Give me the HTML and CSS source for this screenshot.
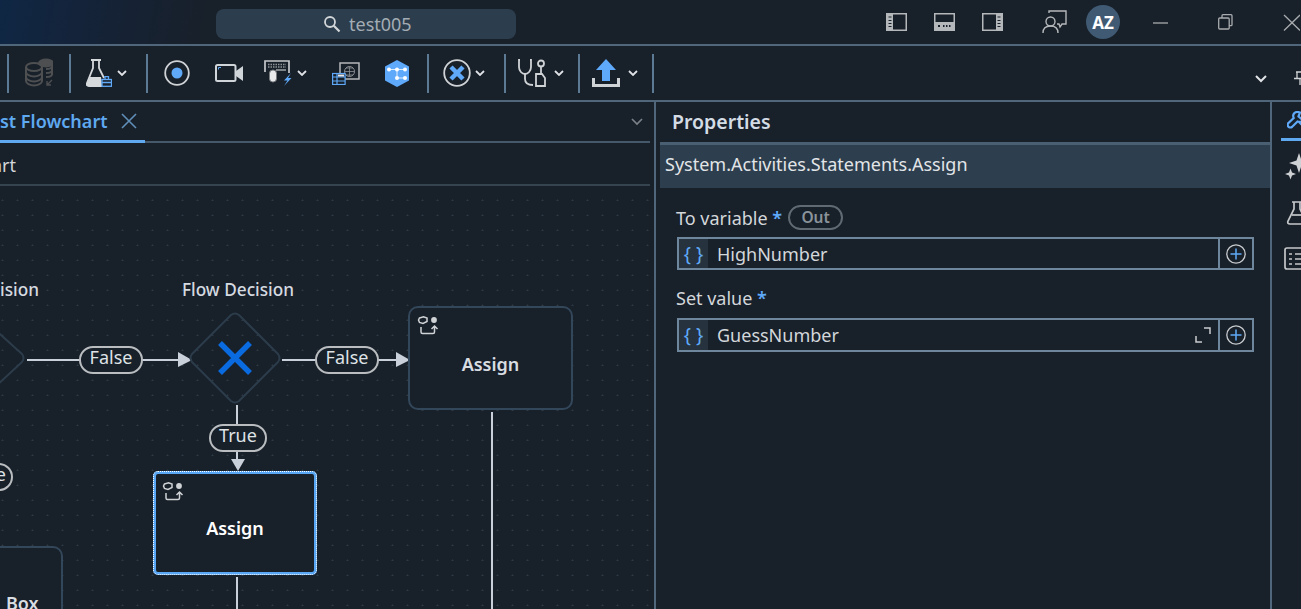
FILE: index.html
```html
<!DOCTYPE html>
<html lang="en">
<head>
<meta charset="utf-8">
<title>test005</title>
<link rel="stylesheet" href="styles.css">
</head>
<body>
<div class="app">
  <header class="titlebar">
    <div class="search">
      <svg width="18" height="18" viewBox="0 0 18 18"><circle cx="7" cy="7" r="5" fill="none" stroke="#d3d6d9" stroke-width="1.8"/><path d="M10.8 10.8L16.5 16.5" stroke="#d3d6d9" stroke-width="2.2"/></svg>
      <span>test005</span>
    </div>
    <div class="layout-icons">
      <svg width="21" height="18" viewBox="0 0 21 18"><rect x=".75" y=".75" width="19.5" height="16.5" fill="none" stroke="#b5b8ba" stroke-width="1.5"/><rect x="1" y="1" width="6" height="16" fill="#b5b8ba"/><path d="M2.5 4h3M2.5 7.500h3M2.500 10.500h3M2.500 13.500h3" stroke="#18202a" stroke-width="1.200"/></svg>
      <svg width="21" height="18" viewBox="0 0 21 18"><rect x=".75" y=".75" width="19.5" height="16.500" fill="none" stroke="#b5b8ba" stroke-width="1.500"/><rect x="1" y="9" width="19" height="8" fill="#b5b8ba"/><path d="M4 13h2M9 13h1.500M12 13h1.500M15 13h1.500" stroke="#18202a" stroke-width="2"/></svg>
      <svg width="21" height="18" viewBox="0 0 21 18"><rect x=".75" y=".75" width="19.500" height="16.500" fill="none" stroke="#b5b8ba" stroke-width="1.500"/><rect x="14" y="1" width="6" height="16" fill="#b5b8ba"/><path d="M15.500 4h3M15.500 7.500h3M15.500 10.500h3M15.500 13.500h3" stroke="#18202a" stroke-width="1.200"/></svg>
    </div>
    <svg class="feedback" width="25" height="24" viewBox="0 0 25 24" fill="none" stroke="#b5b8ba" stroke-width="1.400"><path d="M7 3V1h17v13h-4l-2 3-1-3h-2"/><circle cx="8.500" cy="11.500" r="4.500"/><path d="M1 23c0-5 3-7 7.500-7s7.500 2 7.500 7"/></svg>
    <div class="avatar">AZ</div>
    <div class="win-controls">
      <svg width="15" height="15" viewBox="0 0 15 15"><path d="M0 8h15" stroke="#a9acae" stroke-width="1.300"/></svg>
      <svg width="15" height="16" viewBox="0 0 15 16" fill="none" stroke="#a9acae" stroke-width="1.300"><rect x=".7" y="4" width="10.500" height="11" rx="1"/><path d="M4 4V1.700q0-1 1-1h8q1 0 1 1v9q0 1-1 1h-2"/></svg>
      <svg width="17" height="17" viewBox="0 0 17 17"><path d="M1 1l16 15.500M17 1L1 16.500" stroke="#a9acae" stroke-width="1.300"/></svg>
    </div>
  </header>

  <nav class="toolbar">
    <i class="sep"></i>
    <div class="tool w-db">
      <svg width="28" height="30" viewBox="0 0 28 30" fill="none" stroke="#4d4f51" stroke-width="2"><ellipse cx="21" cy="5" rx="7" ry="3.500" fill="#4d4f51"/><path d="M27 8c0 2-3 3-6 3M27 12c0 2-3 3-6 3M27 16c0 2-3 3-6 3M27 5v12"/><ellipse cx="9" cy="9" rx="8" ry="4"/><path d="M1 9v14c0 2.500 4 4.500 8 4.500s8-2 8-4.500V9M1 14c0 2.500 4 4.500 8 4.500s8-2 8-4.500M1 19c0 2.500 4 4.500 8 4.500s8-2 8-4.500"/><path d="M27 22l-5 5M22 23v4h4" stroke-width="1.400"/></svg>
    </div>
    <i class="sep"></i>
    <div class="tool w-flask">
      <svg width="26" height="28" viewBox="0 0 26 28"><path d="M5 1h10M7 1v8L1 24q-1 3 2 3h13" fill="none" stroke="#d6d9dc" stroke-width="1.800"/><path d="M13 1v8l5 10" fill="none" stroke="#d6d9dc" stroke-width="1.800"/><path d="M4 18h11l1 9H3q-3 0-2-3z" fill="#d6d9dc"/><rect x="16" y="20.500" width="9.500" height="6.800" fill="#18202a" stroke="#5fa9f8" stroke-width="1.300"/><path d="M19 20v-2.300h3.500V20M16 23.500h9.500" fill="none" stroke="#5fa9f8" stroke-width="1.300"/></svg>
      <svg class="chev" width="10" height="6" viewBox="0 0 10 6"><path d="M1 1l4 4 4-4" fill="none" stroke="#e0e3e6" stroke-width="1.800"/></svg>
    </div>
    <i class="sep"></i>
    <div class="tool w-record">
      <svg width="26" height="26" viewBox="0 0 26 26"><circle cx="13" cy="13" r="11.800" fill="none" stroke="#d0d3d6" stroke-width="1.800"/><circle cx="13" cy="13" r="5.500" fill="#5fa9f8"/></svg>
    </div>
    <div class="tool w-camera">
      <svg width="28" height="18" viewBox="0 0 28 18"><rect x="1" y="1" width="19.500" height="16" rx="1.500" fill="none" stroke="#d0d5d9" stroke-width="2"/><path d="M3.500 5.500V3.500h2.500" fill="none" stroke="#5fa9f8" stroke-width="1"/><path d="M21 7l7-5v15l-7-5z" fill="#d0d5d9"/></svg>
    </div>
    <div class="tool w-keys">
      <svg width="28" height="26" viewBox="0 0 28 26"><path d="M1 12V1h24v12" fill="none" stroke="#c6c9cc" stroke-width="1.700"/><path d="M4 4.500h18M4 7h18" stroke="#8e9296" stroke-width="1.600" stroke-dasharray="1.500 1"/><path d="M12 10h10" stroke="#9a9ea1" stroke-width="1.600"/><rect x="5.500" y="10" width="7" height="12" rx="3.400" fill="#e8eaec" stroke="#777b7f"/><path d="M27 13l-7 7.500h3.500L20 26l7.500-8H24l3-5z" fill="#5fa9f8"/></svg>
      <svg class="chev" width="10" height="6" viewBox="0 0 10 6"><path d="M1 1l4 4 4-4" fill="none" stroke="#e0e3e6" stroke-width="1.800"/></svg>
    </div>
    <div class="tool w-web">
      <svg width="28" height="23" viewBox="0 0 28 23"><rect x="8" y="1" width="19" height="16" fill="#18202a" stroke="#b5b8ba" stroke-width="1.500"/><circle cx="17.500" cy="9.500" r="5" fill="none" stroke="#8d9093"/><path d="M12.500 9.500h10M17.500 4.500v10M14 6h7M14 13h7" stroke="#8d9093" stroke-width=".8"/><rect x=".6" y="11.500" width="12.500" height="11" fill="#18202a" stroke="#5fa9f8" stroke-width="1.200"/><path d="M.6 15h12.500M.6 19h12.500M5 11.500v11" stroke="#5fa9f8" stroke-width="1.200"/><path d="M6 12.500h6v2H6z" fill="#e8eaec"/></svg>
    </div>
    <div class="tool w-hex">
      <svg width="24" height="27" viewBox="0 0 24 27"><path d="M12 0l12 6.500v14L12 27 0 20.500v-14z" fill="#5fa9fb"/><path d="M4 9.500h16M12 9.500v8.500h8" fill="none" stroke="#fff" stroke-width=".8"/><circle cx="4" cy="9.500" r="2" fill="#fff"/><circle cx="12" cy="9.500" r="2" fill="#fff"/><circle cx="20" cy="9.500" r="2" fill="#fff"/><circle cx="12" cy="18" r="2" fill="#fff"/><circle cx="20" cy="18" r="2" fill="#fff"/></svg>
    </div>
    <i class="sep"></i>
    <div class="tool w-cancel">
      <svg width="28" height="28" viewBox="0 0 28 28"><circle cx="14" cy="14" r="12.800" fill="none" stroke="#d0d3d6" stroke-width="1.800"/><path d="M8 8l12 12M20 8L8 20" stroke="#5fa9f8" stroke-width="4.500"/></svg>
      <svg class="chev" width="10" height="6" viewBox="0 0 10 6"><path d="M1 1l4 4 4-4" fill="none" stroke="#e0e3e6" stroke-width="1.800"/></svg>
    </div>
    <i class="sep"></i>
    <div class="tool w-scope">
      <svg width="28" height="28" viewBox="0 0 28 28" fill="none" stroke="#d0d3d6" stroke-width="1.800"><path d="M2 1H1v7c0 4 3 7 6 7s6-3 6-7V1h-1"/><path d="M7 15v5c0 4 3 6 8 6"/><circle cx="23" cy="4.500" r="3"/><path d="M23 7.500v7"/><path d="M18 15h6l3 4v8h-9z"/></svg>
      <svg class="chev" width="10" height="6" viewBox="0 0 10 6"><path d="M1 1l4 4 4-4" fill="none" stroke="#e0e3e6" stroke-width="1.800"/></svg>
    </div>
    <i class="sep"></i>
    <div class="tool w-upload">
      <svg width="28" height="28" viewBox="0 0 28 28"><path d="M14 0l10 11h-6v11h-8V11H4z" fill="#5fa9fb"/><path d="M1.500 19v7.500h25V19" fill="none" stroke="#d0d3d6" stroke-width="3"/></svg>
      <svg class="chev" width="10" height="6" viewBox="0 0 10 6"><path d="M1 1l4 4 4-4" fill="none" stroke="#e0e3e6" stroke-width="1.800"/></svg>
    </div>
    <i class="sep"></i>
    <div class="toolbar-end">
      <svg width="12" height="8" viewBox="0 0 12 8"><path d="M1 1l5 5 5-5" fill="none" stroke="#e0e3e6" stroke-width="2"/></svg>
      <svg class="pin" width="14" height="14" viewBox="0 0 14 14" fill="none" stroke="#d0d3d6" stroke-width="1.300"><path d="M3 1h8M4 1v6M10 1v6M1 7.500h12M7 8v6"/></svg>
    </div>
  </nav>

  <main class="workspace">
    <section class="designer">
      <div class="tabs">
        <div class="tab"><span>st Flowchart</span>
          <svg width="16" height="16" viewBox="0 0 16 16"><path d="M1 1l14 14M15 1L1 15" stroke="#5f8fb8" stroke-width="1.600"/></svg>
        </div>
        <svg width="12" height="8" viewBox="0 0 12 8"><path d="M1 1l5 5 5-5" fill="none" stroke="#7b8086" stroke-width="1.700"/></svg>
      </div>
      <div class="crumb">art</div>
      <div class="canvas">
        <svg class="edges" width="651" height="423" viewBox="0 186 651 423">
          <g stroke="#c9d0da" stroke-width="2" fill="none">
            <path d="M27 360H180M282 360H398M237 405V460M492 412V609M237 577V609"/>
          </g>
          <g fill="#c9d0da">
            <path d="M178 352l14 8-14 7zM396 352l14 8-14 7zM231 459h14l-7 12z"/>
          </g>
          <g fill="none" stroke="#2c3c4a" stroke-width="2" stroke-linejoin="round">
            <path d="M-20 316L22 354q3 4 0 8L-20 401"/>
            <path d="M231 315q4-3 8 0L278 354q3 4 0 8L239 401q-4 3-8 0L192 362q-3-4 0-8z"/>
          </g>
          <path d="M220 343l30 30M250 343l-30 30" stroke="#0a6ae0" stroke-width="5.500"/>
        </svg>

        <div class="node-title title-left">ision</div>
        <div class="node-title title-main">Flow Decision</div>

        <div class="pill pill-f1">False</div>
        <div class="pill pill-f2">False</div>
        <div class="pill pill-t1">True</div>
        <div class="pill pill-t2">e</div>

        <div class="node node-right">
          <svg class="node-icon" width="23" height="20" viewBox="0 0 23 20" fill="none" stroke="#d0d3d6" stroke-width="1.500"><path d="M2.500 2l4-1.200L10 2v3.500L6 7.500 2.500 6.500 1.500 4z"/><circle cx="17" cy="4" r="2.900" fill="#d0d3d6" stroke="none"/><path d="M4 11v5q0 1.500 1.500 1.500H16q1.500 0 1.500-1.500v-5.500M14.500 13l3-3 3 3"/></svg>
          <span>Assign</span>
        </div>
        <div class="node node-selected">
          <svg class="node-icon" width="23" height="20" viewBox="0 0 23 20" fill="none" stroke="#d0d3d6" stroke-width="1.500"><path d="M2.500 2l4-1.200L10 2v3.500L6 7.500 2.500 6.500 1.500 4z"/><circle cx="17" cy="4" r="2.900" fill="#d0d3d6" stroke="none"/><path d="M4 11v5q0 1.500 1.500 1.500H16q1.500 0 1.500-1.500v-5.500M14.500 13l3-3 3 3"/></svg>
          <span>Assign</span>
        </div>
        <div class="node node-box"><span>Box</span></div>
      </div>
    </section>

    <aside class="properties">
      <h2 class="props-title">Properties</h2>
      <div class="props-type">System.Activities.Statements.Assign</div>
      <form class="props-form">
        <div class="field-label first"><span>To variable <b>*</b></span><span class="out">Out</span></div>
        <div class="field short">
          <div class="field-main">
            <span class="braces">{ }</span>
            <span class="value">HighNumber</span>
          </div>
          <div class="plus"><svg width="20" height="20" viewBox="0 0 20 20"><circle cx="10" cy="10" r="9.200" fill="none" stroke="#c9ccce" stroke-width="1.300"/><path d="M4.500 10h11M10 4.500v11" stroke="#5fa9f8" stroke-width="1.500"/></svg></div>
        </div>
        <div class="field-label second"><span>Set value <b>*</b></span></div>
        <div class="field">
          <div class="field-main">
            <span class="braces">{ }</span>
            <span class="value">GuessNumber</span>
            <svg class="expand" width="16" height="16" viewBox="0 0 16 16" fill="none" stroke="#c9ccce" stroke-width="1.500"><path d="M9 1h6v6M1 9v6h6"/></svg>
          </div>
          <div class="plus"><svg width="20" height="20" viewBox="0 0 20 20"><circle cx="10" cy="10" r="9.200" fill="none" stroke="#c9ccce" stroke-width="1.300"/><path d="M4.500 10h11M10 4.500v11" stroke="#5fa9f8" stroke-width="1.500"/></svg></div>
        </div>
      </form>
    </aside>

    <div class="rail">
      <div class="rail-tab">
        <svg width="22" height="18" viewBox="0 0 22 18" fill="none" stroke="#5fa9f8" stroke-width="2.200"><path d="M13 1.500q-4-1.500-6 1-1.500 2-.3 4.500L1 12.500q-1 2 .7 3.500 1.800 1 3.300 0l5.500-5.500q3 1 5-.5 2-2 1.500-5l-3 2.500-2.500-2z"/><path d="M12 11l6 6"/></svg>
      </div>
      <svg class="rail-icon spark" width="22" height="28" viewBox="0 0 22 28"><path d="M14 0l2.500 7.500L24 10l-7.500 2.500L14 20l-2.500-7.500L4 10l7.500-2.500zM5.500 15.500l1.500 4 4 1.500-4 1.500-1.500 4-1.500-4-4-1.500 4-1.500z" fill="#cfd2d4"/></svg>
      <svg class="rail-icon flask" width="22" height="24" viewBox="0 0 22 24" fill="none" stroke="#c5c8ca" stroke-width="1.700"><path d="M5 1h9M7 1v7L1 20q-1 3 2 3h14q3 0 2-3L13 8V1"/><path d="M5 14h10"/></svg>
      <svg class="rail-icon list" width="22" height="23" viewBox="0 0 22 23" fill="none" stroke="#c5c8ca" stroke-width="1.700"><rect x="1" y="1" width="26" height="21" rx="2"/><path d="M5 7h3M11 7h14M5 12h3M11 12h14M5 17h3M11 17h8"/></svg>
    </div>
  </main>
</div>
</body>
</html>
```

FILE: styles.css
```css
* { box-sizing: border-box; }
html, body { margin: 0; height: 100%; overflow: hidden; background: #18202a; }
body { font-family: "Noto Sans", "Open Sans", sans-serif; color: #d6dadd; }
svg { display: block; flex: none; }

.app { width: 1301px; height: 609px; display: flex; flex-direction: column; overflow: hidden; }

/* Title bar */
.titlebar {
  height: 46px; flex: none; display: flex; align-items: center;
  padding-left: 216px;
  border-bottom: 2px solid #4f667b;
  background: linear-gradient(100deg, #0f2744 0, #14233a 6%, #18202a 16%);
}
.search {
  width: 300px; height: 30px; flex: none; border-radius: 8px; background: #2c3d4d;
  display: flex; align-items: center; gap: 8px; margin-top: 4px;
  font-size: 18px; color: #a3acb4; padding-left: 107px;
}
.layout-icons { display: flex; flex: none; gap: 27px; margin-left: 370px; }
.feedback { margin-left: 39px; }
.avatar {
  width: 34px; height: 34px; flex: none; border-radius: 50%; background: #3f5a72; color: #fff;
  font-size: 17px; font-weight: 700; display: flex; align-items: center; justify-content: center;
  margin-left: 19px;
}
.win-controls { display: flex; flex: none; align-items: center; margin-left: 33px; gap: 50px; }

/* Toolbar */
.toolbar {
  height: 56px; flex: none; display: flex; align-items: center;
  padding-left: 7px;
  border-bottom: 2px solid #4f667b;
}
.sep { width: 2px; height: 39px; background: #5c7a94; flex: none; }
.tool { height: 39px; display: flex; align-items: center; justify-content: center; flex: none; }
.chev { margin-left: 5px; }
.w-db { width: 60px; }
.w-flask { width: 75px; justify-content: flex-start; padding-left: 15px; }
.w-record { width: 58px; }
.w-camera { width: 45px; }
.w-keys { width: 69px; justify-content: flex-start; padding-left: 13px; }
.w-web { width: 51px; }
.w-hex { width: 52px; margin-right: 4px; }
.w-cancel { width: 75px; justify-content: flex-start; padding-left: 14px; }
.w-cancel .chev { margin-left: 4px; }
.w-scope { width: 72px; justify-content: flex-start; padding-left: 12px; }
.w-scope .chev { margin-left: 8px; }
.w-upload { width: 72px; justify-content: flex-start; padding-left: 12px; }
.w-upload .chev { margin-left: 8px; }
.toolbar-end { display: flex; flex: none; align-items: center; margin-left: 601px; gap: 26px; padding-top: 12px; }
.pin { margin-top: -2px; }

/* Workspace */
.workspace { flex: 1; min-height: 0; display: flex; }

.designer {
  width: 656px; flex: none; border-right: 2px solid #4f667b;
  padding-right: 4px; display: flex; flex-direction: column; overflow: hidden;
}
.tabs {
  height: 41px; flex: none; display: flex; align-items: center; justify-content: space-between;
  border-bottom: 2px solid #46596b; padding-right: 7px;
}
.tab {
  height: 41px; margin-bottom: -2px; width: 145px; border-bottom: 3px solid #5fa9f0;
  display: flex; align-items: center; gap: 13px;
  color: #5fa9f0; font-size: 18px; font-weight: 600; white-space: nowrap; flex: none;
}
.crumb {
  height: 43px; flex: none; border-bottom: 2px solid #36444f;
  font-size: 18px; color: #d3d6d9; line-height: 45px; text-indent: -8px;
}

/* Canvas: nodes are placed on a free diagram surface */
.canvas {
  position: relative; flex: 1; overflow: hidden;
  background-image: radial-gradient(circle at 2.500px 14.500px, #2d3944 .9px, transparent 1.100px);
  background-size: 15px 15px;
}
.edges { position: absolute; left: 0; top: 0; overflow: visible; }

.node-title { position: absolute; font-size: 17.200px; font-weight: 500; color: #d5dae0; white-space: nowrap; line-height: 22px; }
.title-main { left: 182px; top: 93px; }
.title-left { left: 0; top: 93px; }

.pill {
  position: absolute; height: 28px; border: 2px solid #b9bdc0; border-radius: 14px; background: #18202a;
  font-size: 18px; line-height: 19px; text-align: center; color: #dfe3e6;
}
.pill-f1 { left: 79px; top: 160px; width: 64px; }
.pill-f2 { left: 315px; top: 160px; width: 64px; }
.pill-t1 { left: 209px; top: 238px; width: 58px; }
.pill-t2 { left: -45px; top: 277px; width: 58px; text-align: right; padding-right: 5px; }

.node {
  position: absolute; width: 164px; height: 104px; border-radius: 10px; background: #18202a;
  display: flex; align-items: center; justify-content: center;
  font-size: 18px; font-weight: 600; color: #d8dde2;
}
.node span { margin-top: 9px; }
.node-icon { position: absolute; left: 7px; top: 8px; }
.node-right { left: 408px; top: 120px; width: 165px; border: 2px solid #33475a; }
.node-right span { margin-top: 11px; }
.node-selected {
  left: 153px; top: 285px; border: 3px solid #5aa8f5; border-radius: 5px; color: #fff;
  outline: 1px dotted #fff; outline-offset: -1px;
}
.node-selected .node-icon { left: 6px; top: 8px; }
.node-box { left: -101px; top: 360px; border: 2px solid #33475a; }
.node-box span { position: absolute; left: 105px; top: 43px; margin: 0; }

/* Properties */
.properties { width: 614px; flex: none; padding-left: 4px; display: flex; flex-direction: column; }
.props-title {
  margin: 0; height: 40px; flex: none; padding-left: 12px; font-size: 19.500px; font-weight: 600; line-height: 40px; color: #d3dce4;
}
.props-type {
  height: 46px; flex: none; border-top: 3px solid #4a5f72; background: #2d3e4e;
  padding-left: 5px; font-size: 18px; line-height: 38px; color: #e2e5e8; white-space: nowrap;
}
.props-form { padding: 17px 16px 0 17px; }
.field-label { display: flex; align-items: center; gap: 6px; margin-left: -1px; font-size: 18px; color: #d3d7da; }
.field-label b { color: #5fa9f8; font-weight: 600; }
.first { height: 25px; margin-bottom: 7px; }
.second { height: 21px; margin-top: 17px; margin-bottom: 10px; }
.out {
  width: 55px; height: 25px; border: 2px solid #5f6a73; border-radius: 13px;
  font-size: 15.500px; font-weight: 600; color: #8b949b; text-align: center; line-height: 20px;
}
.field { display: flex; height: 34px; }
.field.short { height: 33px; }
.field-main {
  flex: 1; display: flex; align-items: center; position: relative;
  border: 2px solid #6f879d; font-size: 18px; color: #d3d7da;
}
.braces {
  width: 29px; align-self: stretch; background: #26333e; color: #5fa9f8; display: flex;
  align-items: center; justify-content: center; font-size: 19px; flex: none; margin-right: 9px;
}
.value { white-space: nowrap; }
.expand { position: absolute; right: 7px; top: 7px; }
.plus {
  width: 34px; flex: none; border: 2px solid #6f879d; border-left: 0;
  display: flex; align-items: center; justify-content: center;
}

/* Right rail */
.rail {
  flex: 1; border-left: 2px solid #4f667b; padding-left: 9px; overflow: hidden;
  display: flex; flex-direction: column;
}
.rail-tab { height: 39px; border-bottom: 3px solid #5fa9f0; padding: 9px 0 0 6px; width: 30px; flex: none; }
.rail-icon { margin-left: 4px; overflow: visible; }
.spark { margin-top: 12px; }
.flask { margin: 20px 0 0 6px; }
.list { margin: 22px 0 0 3px; }
```
